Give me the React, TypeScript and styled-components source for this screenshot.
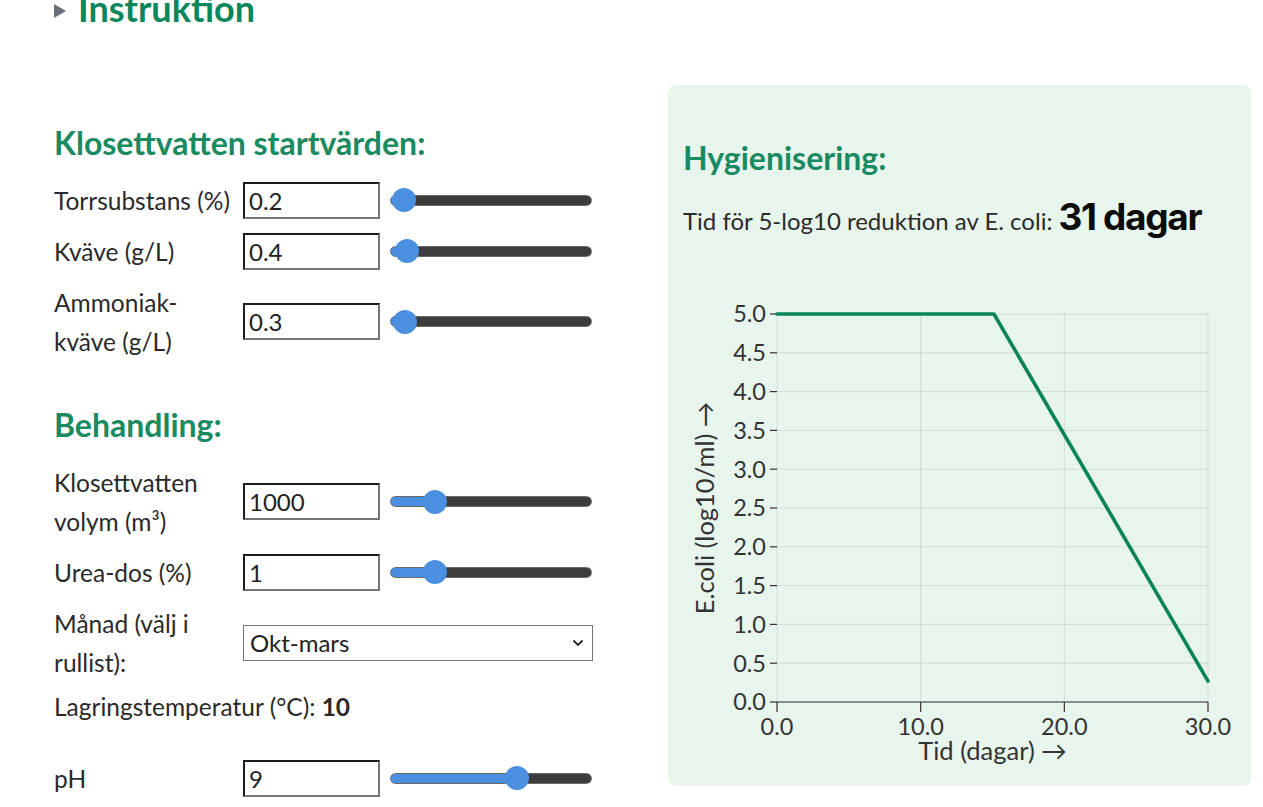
import React from "react";
import styled, { createGlobalStyle } from "styled-components";

const GlobalStyle = createGlobalStyle`
  html, body {
    margin: 0;
    padding: 0;
    background: #ffffff;
  }
  body {
    font-family: Lato, "Liberation Sans", sans-serif;
    color: #2a2a2a;
    overflow: hidden;
  }
  * { box-sizing: border-box; }
`;

const GREEN = "#1a8a61";
const BLUE = "#4a8fe0";

const Page = styled.div`
  margin-top: -12px;
  padding: 0 12px 40px 54px;
`;

const Disclosure = styled.div`
  display: flex;
  align-items: center;
  gap: 12px;
  height: 40px;
`;

const Caret = styled.span`
  width: 0;
  height: 0;
  border-left: 12px solid #6b6f77;
  border-top: 7px solid transparent;
  border-bottom: 7px solid transparent;
  margin-top: 6px;
`;

const DisclosureTitle = styled.span`
  font-size: 36px;
  font-weight: 700;
  color: #0b875b;
  line-height: 40px;
`;

const Columns = styled.div`
  display: grid;
  grid-template-columns: 539px 583px;
  column-gap: 75px;
  align-items: start;
  margin-top: 57px;
`;

const Controls = styled.div`
  display: flex;
  flex-direction: column;
`;

const SectionTitle = styled.h3<{ $top: number }>`
  margin: ${(p) => p.$top}px 0 18.5px;
  font-size: 32px;
  line-height: 38px;
  font-weight: 700;
  color: ${GREEN};
`;

const FieldList = styled.div`
  display: flex;
  flex-direction: column;
  gap: 12px;
`;

const FieldRow = styled.div`
  display: grid;
  grid-template-columns: 189px 137px 212px;
  align-items: center;
  min-height: 39px;
`;

const FieldLabel = styled.label`
  font-size: 24.5px;
  line-height: 39px;
  padding-right: 4px;
  white-space: nowrap;
`;

const NumberBox = styled.input`
  width: 137px;
  height: 37px;
  border-style: solid;
  border-width: 2px;
  border-color: #1c1c1c #767676 #767676 #1c1c1c;
  padding: 0 4px;
  font-family: Lato, "Liberation Sans", sans-serif;
  font-size: 24px;
  color: #222;
  background: #fff;
  -moz-appearance: textfield;
  &::-webkit-outer-spin-button,
  &::-webkit-inner-spin-button {
    -webkit-appearance: none;
    margin: 0;
  }
`;

const Slider = styled.input`
  -webkit-appearance: none;
  appearance: none;
  width: 202px;
  height: 24px;
  margin: 0 0 0 10px;
  background: transparent;
  &::-webkit-slider-runnable-track {
    height: 11px;
    border-radius: 6px;
    border: 1px solid #6a6a6a;
    background: linear-gradient(
      to right,
      ${BLUE} var(--fill),
      #3c3c3c var(--fill)
    );
  }
  &::-webkit-slider-thumb {
    -webkit-appearance: none;
    width: 24px;
    height: 24px;
    border-radius: 50%;
    background: ${BLUE};
    border: none;
    margin-top: -7.5px;
  }
`;

const SelectWrap = styled.div`
  grid-column: 2 / span 2;
  position: relative;
  width: 350px;
`;

const Select = styled.select`
  -webkit-appearance: none;
  appearance: none;
  width: 100%;
  height: 36px;
  border: 1px solid #767676;
  border-radius: 0;
  background: #fff;
  padding: 0 30px 0 6px;
  font-family: Lato, "Liberation Sans", sans-serif;
  font-size: 24px;
  color: #222;
`;

const Chevron = styled.svg`
  position: absolute;
  right: 9px;
  top: 14px;
  pointer-events: none;
`;

const Readout = styled.p`
  margin: 5px 0 33px;
  font-size: 24.5px;
  line-height: 39px;
  b { font-weight: 700; }
`;

const ResultCard = styled.section`
  background: #e8f5ec;
  border-radius: 8px;
  padding: 0 16px 15px 15px;
  min-height: 700px;
`;

const CardTitle = styled.h3`
  margin: 54px 0 0;
  font-size: 32px;
  line-height: 38px;
  font-weight: 700;
  color: ${GREEN};
`;

const ResultLine = styled.p`
  margin: 20.5px 0 0;
  font-size: 24px;
  line-height: 39px;
  height: 39px;
  white-space: nowrap;
`;

const BigValue = styled.span`
  font-family: Inter, "Liberation Sans", sans-serif;
  font-weight: 700;
  font-size: 37px;
  letter-spacing: -1.3px;
  line-height: 1;
  color: #0c0c0c;
  margin-left: 6px;
`;

const ChartFrame = styled.svg`
  display: block;
  margin-top: 54px;
  font-family: Lato, "Liberation Sans", sans-serif;
`;

type Field = {
  label: React.ReactNode;
  value: string;
  min: number;
  max: number;
};

const sliderFill = (value: number, min: number, max: number) => {
  const frac = (value - min) / (max - min);
  const center = 12 + frac * (202 - 24);
  return `${((center / 202) * 100).toFixed(2)}%`;
};

const FieldControl: React.FC<Field> = ({ label, value, min, max }) => {
  const num = parseFloat(value);
  return (
    <FieldRow>
      <FieldLabel>{label}</FieldLabel>
      <NumberBox type="number" defaultValue={value} />
      <Slider
        type="range"
        min={min}
        max={max}
        step="any"
        defaultValue={num}
        style={{ ["--fill" as string]: sliderFill(num, min, max) } as React.CSSProperties}
      />
    </FieldRow>
  );
};

const startFields: Field[] = [
  { label: "Torrsubstans (%)", value: "0.2", min: 0, max: 40 },
  { label: "Kväve (g/L)", value: "0.4", min: 0, max: 20 },
  {
    label: (
      <>
        Ammoniak-
        <br />
        kväve (g/L)
      </>
    ),
    value: "0.3",
    min: 0,
    max: 30,
  },
];

const treatmentFields: Field[] = [
  {
    label: (
      <>
        Klosettvatten
        <br />
        volym (m³)
      </>
    ),
    value: "1000",
    min: 100,
    max: 5000,
  },
  { label: "Urea-dos (%)", value: "1", min: 0.1, max: 5 },
];

/* Decay curve: flat lag phase, then linear log-reduction */
const curve: [number, number][] = [
  [0, 5],
  [15.1, 5],
  [30, 0.27],
];

const PLOT = { left: 94, right: 525, top: 23, bottom: 411 };
const xs = (d: number) => PLOT.left + (d / 30) * (PLOT.right - PLOT.left);
const ys = (v: number) => PLOT.bottom - (v / 5) * (PLOT.bottom - PLOT.top);

const DecayChart: React.FC = () => {
  const yTicks = Array.from({ length: 11 }, (_, i) => i * 0.5);
  const xTicks = [0, 10, 20, 30];
  const path = curve.map(([d, v], i) => `${i ? "L" : "M"}${xs(d)},${ys(v)}`).join("");
  return (
    <ChartFrame width={552} height={480} viewBox="0 0 552 480">
      <g stroke="#000" strokeOpacity={0.1}>
        {yTicks.map((t) => (
          <line key={t} x1={PLOT.left} x2={PLOT.right} y1={ys(t)} y2={ys(t)} />
        ))}
        {xTicks.map((t) => (
          <line key={t} x1={xs(t)} x2={xs(t)} y1={PLOT.top} y2={PLOT.bottom} />
        ))}
      </g>
      <g stroke="#333" strokeWidth={1.2}>
        {yTicks.map((t) => (
          <line key={t} x1={PLOT.left - 7} x2={PLOT.left} y1={ys(t)} y2={ys(t)} />
        ))}
        <line x1={PLOT.left} x2={PLOT.right} y1={PLOT.bottom} y2={PLOT.bottom} />
        {xTicks.map((t) => (
          <line key={t} x1={xs(t)} x2={xs(t)} y1={PLOT.bottom} y2={PLOT.bottom + 10} />
        ))}
      </g>
      <g fill="#333" fontSize={23.5}>
        {yTicks.map((t) => (
          <text key={t} x={PLOT.left - 11} y={ys(t)} dy="0.36em" textAnchor="end">
            {t.toFixed(1)}
          </text>
        ))}
        {xTicks.map((t) => (
          <text key={t} x={xs(t)} y={PLOT.bottom + 33} textAnchor="middle">
            {t.toFixed(1)}
          </text>
        ))}
      </g>
      <g fill="#333" fontSize={25.5}>
        <text x={(PLOT.left + PLOT.right) / 2} y={PLOT.bottom + 58} textAnchor="middle">
          Tid (dagar) →
        </text>
        <text
          transform={`translate(31, ${(PLOT.top + PLOT.bottom) / 2}) rotate(-90)`}
          textAnchor="middle"
        >
          E.coli (log10/ml) →
        </text>
      </g>
      <path
        d={path}
        fill="none"
        stroke="#0b8457"
        strokeWidth={3.6}
        strokeLinejoin="round"
        strokeLinecap="round"
      />
    </ChartFrame>
  );
};

export default function App() {
  return (
    <>
      <GlobalStyle />
      <Page>
        <Disclosure>
          <Caret />
          <DisclosureTitle>Instruktion</DisclosureTitle>
        </Disclosure>
        <Columns>
          <Controls>
            <SectionTitle $top={39}>Klosettvatten startvärden:</SectionTitle>
            <FieldList>
              {startFields.map((f) => (
                <FieldControl key={f.value} {...f} />
              ))}
            </FieldList>
            <SectionTitle $top={45.5}>Behandling:</SectionTitle>
            <FieldList>
              {treatmentFields.map((f) => (
                <FieldControl key={f.value} {...f} />
              ))}
              <FieldRow>
                <FieldLabel>
                  Månad (välj i
                  <br />
                  rullist):
                </FieldLabel>
                <SelectWrap>
                  <Select defaultValue="okt">
                    <option value="apr">April-sept</option>
                    <option value="okt">Okt-mars</option>
                  </Select>
                  <Chevron width="12" height="8" viewBox="0 0 12 8">
                    <path d="M1.5 1.5 L6 6 L10.5 1.5" fill="none" stroke="#222" strokeWidth="1.8" />
                  </Chevron>
                </SelectWrap>
              </FieldRow>
            </FieldList>
            <Readout>
              Lagringstemperatur (°C): <b>10</b>
            </Readout>
            <FieldList>
              <FieldControl label="pH" value="9" min={7} max={10.1} />
            </FieldList>
          </Controls>
          <ResultCard>
            <CardTitle>Hygienisering:</CardTitle>
            <ResultLine>
              Tid för 5-log10 reduktion av E. coli:
              <BigValue>31 dagar</BigValue>
            </ResultLine>
            <DecayChart />
          </ResultCard>
        </Columns>
      </Page>
    </>
  );
}
